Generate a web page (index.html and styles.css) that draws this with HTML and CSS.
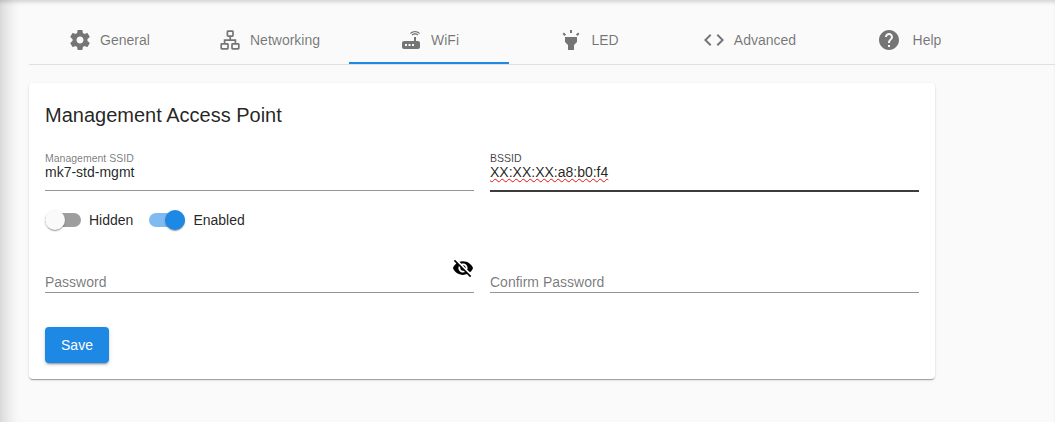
FILE: index.html
```html
<!DOCTYPE html>
<html lang="en">
<head>
    <meta charset="UTF-8">
    <meta name="viewport" content="width=device-width, initial-scale=1.0">
    <title>WiFi settings</title>
    <link rel="stylesheet" href="styles.css">
</head>
<body>
    <div class="page">
        <nav class="tabs">
            <a class="tab">
                <svg class="tab-icon" viewBox="0 0 24 24"><path d="M19.43 12.98c.04-.32.07-.64.07-.98s-.03-.66-.07-.98l2.11-1.65c.19-.15.24-.42.12-.64l-2-3.46c-.12-.22-.39-.3-.61-.22l-2.49 1c-.52-.4-1.08-.73-1.69-.98l-.38-2.65C14.46 2.18 14.25 2 14 2h-4c-.25 0-.46.18-.49.42l-.38 2.65c-.61.25-1.17.59-1.69.98l-2.49-1c-.23-.09-.49 0-.61.22l-2 3.46c-.13.22-.07.49.12.64l2.11 1.65c-.04.32-.07.65-.07.98s.03.66.07.98l-2.11 1.65c-.19.15-.24.42-.12.64l2 3.46c.12.22.39.3.61.22l2.49-1c.52.4 1.08.73 1.69.98l.38 2.65c.03.24.24.42.49.42h4c.25 0 .46-.18.49-.42l.38-2.65c.61-.25 1.17-.59 1.69-.98l2.49 1c.23.09.49 0 .61-.22l2-3.46c.12-.22.07-.49-.12-.64l-2.11-1.65zM12 15.5c-1.93 0-3.5-1.57-3.5-3.5s1.57-3.5 3.5-3.5 3.5 1.57 3.5 3.5-1.57 3.5-3.5 3.5z"/></svg>
                General
            </a>
            <a class="tab">
                <svg class="tab-icon network" viewBox="0 0 24 24">
                    <rect x="9.400" y="3.200" width="5.600" height="5" rx="0.6"/>
                    <rect x="3.200" y="15.800" width="6.800" height="5" rx="0.6"/>
                    <rect x="14" y="15.800" width="6.800" height="5" rx="0.6"/>
                    <path d="M12.200 8.200v4M6.600 15.800v-3.600h10.800v3.600"/>
                </svg>
                Networking
            </a>
            <a class="tab active">
                <svg class="tab-icon" viewBox="0 0 24 24"><path d="M20.200 5.900l.8-.8C19.600 3.700 17.800 3 16 3s-3.600.7-5 2.100l.8.8C13 4.800 14.500 4.200 16 4.200s3 .6 4.200 1.700zm-.9.8c-.9-.9-2.100-1.400-3.300-1.400s-2.400.5-3.300 1.400l.8.8c.7-.7 1.600-1 2.500-1 .9 0 1.800.3 2.500 1l.8-.8zM19 13h-2V9h-2v4H5c-1.100 0-2 .9-2 2v4c0 1.100.9 2 2 2h14c1.100 0 2-.9 2-2v-4c0-1.100-.9-2-2-2zM8 18H6v-2h2v2zm3.500 0h-2v-2h2v2zm3.500 0h-2v-2h2v2z"/></svg>
                WiFi
            </a>
            <a class="tab">
                <svg class="tab-icon" viewBox="0 0 24 24"><path d="M6 14l3 3v5h6v-5l3-3V9H6zm5-12h2v3h-2zM3.500 5.875L4.914 4.460l2.120 2.122L5.620 7.997zm13.460.71l2.123-2.120 1.414 1.414L18.375 8z"/></svg>
                LED
            </a>
            <a class="tab">
                <svg class="tab-icon" viewBox="0 0 24 24"><path d="M9.400 16.600L4.800 12l4.600-4.600L8 6l-6 6 6 6 1.400-1.400zm5.200 0l4.600-4.600-4.600-4.600L16 6l6 6-6 6-1.400-1.400z"/></svg>
                Advanced
            </a>
            <a class="tab help">
                <svg class="tab-icon" viewBox="0 0 24 24"><path d="M12 2C6.480 2 2 6.480 2 12s4.480 10 10 10 10-4.480 10-10S17.520 2 12 2zm1 17h-2v-2h2v2zm2.070-7.750l-.9.92C13.450 12.900 13 13.500 13 15h-2v-.5c0-1.100.45-2.100 1.170-2.830l1.240-1.260c.37-.36.59-.86.59-1.410 0-1.100-.9-2-2-2s-2 .9-2 2H8c0-2.210 1.790-4 4-4s4 1.790 4 4c0 .88-.36 1.680-.93 2.250z"/></svg>
                Help
            </a>
        </nav>

        <section class="card">
            <h2 class="card-title">Management Access Point</h2>

            <div class="form-row">
                <div class="field">
                    <label class="field-label">Management SSID</label>
                    <div class="field-value">mk7-std-mgmt</div>
                </div>
                <div class="field focused">
                    <label class="field-label">BSSID</label>
                    <div class="field-value"><span class="misspelled">XX:XX:XX:a8:b0:f4</span></div>
                </div>
            </div>

            <div class="switches">
                <div class="switch-item">
                    <span class="switch"><span class="thumb"></span></span>
                    Hidden
                </div>
                <div class="switch-item">
                    <span class="switch on"><span class="thumb"></span></span>
                    Enabled
                </div>
            </div>

            <div class="form-row">
                <div class="field password">
                    <div class="placeholder">Password</div>
                    <svg class="eye" viewBox="0 0 24 24"><path d="M12 7c2.760 0 5 2.240 5 5 0 .65-.13 1.260-.36 1.830l2.920 2.920c1.510-1.260 2.700-2.890 3.430-4.750-1.730-4.390-6-7.500-11-7.500-1.400 0-2.740.25-3.980.7l2.160 2.160C10.740 7.130 11.350 7 12 7zM2 4.270l2.280 2.280.46.46C3.080 8.300 1.780 10.020 1 12c1.730 4.390 6 7.500 11 7.500 1.550 0 3.030-.3 4.380-.84l.42.42L19.730 22 21 20.730 3.270 3 2 4.270zM7.530 9.800l1.550 1.550c-.05.21-.08.43-.08.65 0 1.660 1.340 3 3 3 .22 0 .44-.03.65-.08l1.550 1.550c-.67.33-1.410.53-2.200.53-2.760 0-5-2.240-5-5 0-.79.2-1.530.53-2.200zm4.310-.78l3.150 3.150.02-.16c0-1.660-1.340-3-3-3l-.17.01z"/></svg>
                </div>
                <div class="field password">
                    <div class="placeholder">Confirm Password</div>
                </div>
            </div>

            <button type="button" class="save-btn">Save</button>
        </section>
    </div>
</body>
</html>
```

FILE: styles.css
```css
:root {
    --primary-color: #1e88e5;
    --bg-color: #fafafa;
    --text-color: rgba(0, 0, 0, 0.87);
    --muted-color: rgba(0, 0, 0, 0.54);
}

* {
    box-sizing: border-box;
}

body {
    margin: 0;
    background-color: var(--bg-color);
    font-family: "Liberation Sans", Arial, sans-serif;
    color: var(--text-color);
}

/* app bar and drawer shadows fall on the page edges */
.page {
    height: 422px;
    padding-left: 29px;
    overflow: hidden;
    box-shadow: inset 0 4px 4px -2px rgba(0, 0, 0, 0.16), inset 18px 0 14px -10px rgba(0, 0, 0, 0.13);
}

.tabs {
    display: flex;
    height: 65px;
    border-bottom: 1px solid #e0e0e0;
}

.tab {
    width: 160px;
    height: 64px;
    display: flex;
    align-items: center;
    justify-content: center;
    gap: 8px;
    padding-top: 16px;
    font-size: 14px;
    color: var(--muted-color);
}

.tab.active {
    box-shadow: inset 0 -2px 0 var(--primary-color);
}

.tab.help {
    gap: 12px;
}

.tab-icon {
    width: 24px;
    height: 24px;
    fill: #757575;
}

.tab-icon.network {
    fill: none;
    stroke: #757575;
    stroke-width: 1.7;
}

.card {
    width: 906px;
    height: 296px;
    margin-top: 18px;
    padding: 16px;
    background: #fff;
    border-radius: 4px;
    box-shadow: 0 2px 1px -1px rgba(0,0,0,0.2), 0 1px 1px 0 rgba(0,0,0,0.14), 0 1px 3px 0 rgba(0,0,0,0.12);
}

.card-title {
    margin: 0 0 16px;
    font-size: 20px;
    font-weight: 400;
    line-height: 32px;
}

.form-row {
    display: grid;
    grid-template-columns: 429px 429px;
    gap: 16px;
}

.field {
    position: relative;
    height: 44px;
    padding-top: 5px;
    border-bottom: 1px solid #949494;
}

.field.focused {
    border-bottom: 2px solid #3c3c3c;
    height: 45px;
}

.field-label {
    display: block;
    font-size: 10.5px;
    line-height: 12px;
    color: var(--muted-color);
}

.focused .field-label {
    color: rgba(0, 0, 0, 0.75);
}

.field-value {
    font-size: 14px;
    line-height: 16px;
}

.misspelled {
    text-decoration: underline wavy #f01010 1.2px;
}

.switches {
    display: flex;
    gap: 16px;
    height: 38px;
    margin-top: 9px;
    margin-bottom: 8px;
}

.switch-item {
    display: flex;
    align-items: center;
    gap: 8px;
    font-size: 14px;
}

.switch {
    position: relative;
    width: 36px;
    height: 14px;
    border-radius: 7px;
    background: #9e9e9e;
}

.switch.on {
    background: #7fbaf0;
}

.thumb {
    position: absolute;
    top: -3px;
    left: 0;
    width: 20px;
    height: 20px;
    border-radius: 50%;
    background: #fafafa;
    box-shadow: 0 2px 1px -1px rgba(0,0,0,0.2), 0 1px 1px 0 rgba(0,0,0,0.14), 0 1px 3px 0 rgba(0,0,0,0.12);
}

.switch.on .thumb {
    left: 16px;
    background: var(--primary-color);
}

.field.password {
    height: 46px;
    padding-top: 27px;
}

.placeholder {
    font-size: 14px;
    line-height: 16px;
    color: var(--muted-color);
}

.eye {
    position: absolute;
    top: 10px;
    right: 0;
    width: 22px;
    height: 22px;
    fill: #000;
}

.save-btn {
    display: block;
    width: 64px;
    height: 36px;
    margin-top: 34px;
    border: none;
    border-radius: 4px;
    background-color: var(--primary-color);
    color: #fff;
    font-family: inherit;
    font-size: 14px;
    box-shadow: 0 3px 1px -2px rgba(0,0,0,0.2), 0 2px 2px 0 rgba(0,0,0,0.14), 0 1px 5px 0 rgba(0,0,0,0.12);
}
```
